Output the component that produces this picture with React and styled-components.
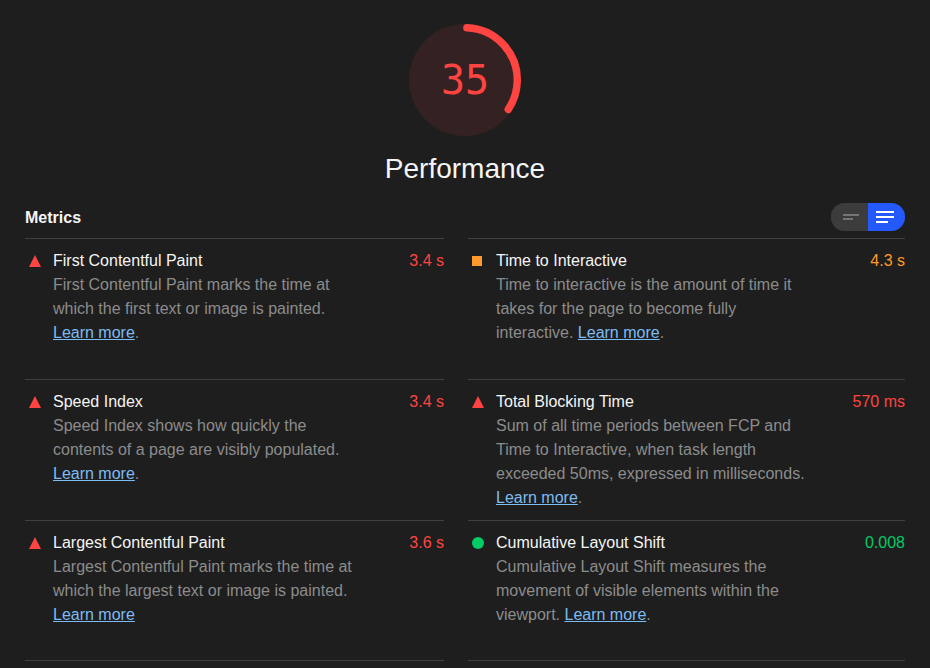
import React, { useState } from "react";
import styled, { createGlobalStyle, css } from "styled-components";

const colors = {
  page: "#1e1e1e",
  text: "#f5f5f5",
  muted: "#8c8c8c",
  line: "#3f3f3f",
  link: "#7cbcf3",
  fail: "#ff4441",
  average: "#ff9a2b",
  pass: "#00cc66",
};

const GlobalStyle = createGlobalStyle`
  * { box-sizing: border-box; }
  body {
    margin: 0;
    background: ${colors.page};
    color: ${colors.text};
    font: 16px/24px "Liberation Sans", Helvetica, Arial, sans-serif;
  }
`;

const Page = styled.main`
  padding: 24px 25px 0;
`;

const Summary = styled.header`
  display: flex;
  flex-direction: column;
  align-items: center;
  gap: 17px;
`;

const Gauge = styled.div`
  display: grid;
  place-items: center;
  width: 112px;
  height: 112px;
  & > * { grid-area: 1 / 1; }
`;

const GaugeDial = styled.svg`
  display: block;
  width: 100%;
  height: 100%;
  overflow: visible;
`;

const GaugeScore = styled.span`
  color: ${colors.fail};
  font: 40px/48px "DejaVu Sans Mono", monospace;
`;

const Title = styled.h1`
  margin: 0;
  font-size: 28px;
  line-height: 32px;
  font-weight: 400;
`;

const MetricsHeader = styled.div`
  display: flex;
  align-items: flex-end;
  justify-content: space-between;
  margin: 18px 0 7px;
`;

const MetricsTitle = styled.h2`
  margin: 0;
  font-size: 16px;
  line-height: 26px;
  font-weight: 700;
`;

const Toggle = styled.div`
  display: flex;
  border-radius: 14px;
  overflow: hidden;
  background: #3c3c3c;
`;

const ToggleButton = styled.button`
  display: flex;
  align-items: center;
  justify-content: center;
  width: 37px;
  height: 28px;
  padding: 0;
  border: 0;
  cursor: pointer;
  color: ${(p) => (p.$active ? "#ffffff" : "#757575")};
  background: ${(p) => (p.$active ? "#2459fb" : "#3c3c3c")};
  ${(p) => p.$end === "left" && css`padding-left: 3px;`}
  ${(p) => p.$end === "right" && css`padding-right: 3px;`}
`;

const Columns = styled.div`
  display: grid;
  grid-template-columns: minmax(0, 419fr) minmax(0, 437fr);
  column-gap: 24px;
`;

const Metric = styled.article`
  display: grid;
  grid-template-columns: 28px minmax(0, 1fr) auto;
  align-content: start;
  min-height: 141px;
  padding-top: 10px;
  border-top: 1px solid ${colors.line};
  ${(p) => p.$last && css`border-bottom: 1px solid ${colors.line};`}
`;

const MarkerCell = styled.span`
  display: flex;
  align-items: center;
  height: 24px;
  padding-left: 4px;
`;

const Marker = styled.span`
  ${(p) => p.$rating === "fail" && css`
    width: 0;
    border: 6px solid transparent;
    border-top: 0;
    border-bottom: 12px solid ${colors.fail};
  `}
  ${(p) => p.$rating === "average" && css`
    width: 10px;
    height: 10px;
    background: ${colors.average};
  `}
  ${(p) => p.$rating === "pass" && css`
    width: 12px;
    height: 12px;
    border-radius: 50%;
    background: ${colors.pass};
  `}
`;

const MetricName = styled.h3`
  margin: 0;
  font-size: 16px;
  line-height: 24px;
  font-weight: 400;
`;

const MetricValue = styled.span`
  color: ${(p) => colors[p.$rating]};
`;

const Description = styled.p`
  grid-column: 2 / -1;
  max-width: 312px;
  margin: 0;
  color: ${colors.muted};
`;

const Link = styled.a`
  color: ${colors.link};
`;

const metrics = [
  { name: "First Contentful Paint", value: "3.4 s", rating: "fail", text: "First Contentful Paint marks the time at which the first text or image is painted.", end: "." },
  { name: "Time to Interactive", value: "4.3 s", rating: "average", text: "Time to interactive is the amount of time it takes for the page to become fully interactive.", end: "." },
  { name: "Speed Index", value: "3.4 s", rating: "fail", text: "Speed Index shows how quickly the contents of a page are visibly populated.", end: "." },
  { name: "Total Blocking Time", value: "570 ms", rating: "fail", text: "Sum of all time periods between FCP and Time to Interactive, when task length exceeded 50ms, expressed in milliseconds.", end: "." },
  { name: "Largest Contentful Paint", value: "3.6 s", rating: "fail", text: "Largest Contentful Paint marks the time at which the largest text or image is painted.", end: "" },
  { name: "Cumulative Layout Shift", value: "0.008", rating: "pass", text: "Cumulative Layout Shift measures the movement of visible elements within the viewport.", end: "." },
];

function ScoreGauge({ score }) {
  const arc = (score / 100) * 2 * Math.PI * 56 - 4;
  return (
    <Gauge>
      <GaugeDial viewBox="0 0 120 120" aria-hidden="true">
        <circle cx="60" cy="60" r="60" fill={colors.fail} fillOpacity="0.1" />
        <circle
          cx="60"
          cy="60"
          r="56"
          fill="none"
          stroke={colors.fail}
          strokeWidth="8"
          strokeLinecap="round"
          strokeDasharray={`${arc} 352`}
          transform="rotate(-87.95 60 60)"
        />
      </GaugeDial>
      <GaugeScore>{score}</GaugeScore>
    </Gauge>
  );
}

export default function App() {
  const [expanded, setExpanded] = useState(true);
  return (
    <>
      <GlobalStyle />
      <Page>
        <Summary>
          <ScoreGauge score={35} />
          <Title>Performance</Title>
        </Summary>
        <MetricsHeader>
          <MetricsTitle>Metrics</MetricsTitle>
          <Toggle role="group" aria-label="Metric view">
            <ToggleButton type="button" aria-label="Compact view" aria-pressed={!expanded} $active={!expanded} $end="left" onClick={() => setExpanded(false)}>
              <svg width="16" height="6" viewBox="0 0 16 6" fill="currentColor" aria-hidden="true">
                <path d="M0 0h16v2H0zM0 4h10v2H0z" />
              </svg>
            </ToggleButton>
            <ToggleButton type="button" aria-label="Expanded view" aria-pressed={expanded} $active={expanded} $end="right" onClick={() => setExpanded(true)}>
              <svg width="18" height="12" viewBox="0 0 18 12" fill="currentColor" aria-hidden="true">
                <path d="M0 0h18v2H0zM0 5h18v2H0zM0 10h12v2H0z" />
              </svg>
            </ToggleButton>
          </Toggle>
        </MetricsHeader>
        <Columns>
          {metrics.map((m, i) => (
            <Metric key={m.name} $last={i >= metrics.length - 2}>
              <MarkerCell>
                <Marker $rating={m.rating} />
              </MarkerCell>
              <MetricName>{m.name}</MetricName>
              <MetricValue $rating={m.rating}>{m.value}</MetricValue>
              {expanded && (
                <Description>
                  {m.text} <Link href="#learn-more">Learn more</Link>
                  {m.end}
                </Description>
              )}
            </Metric>
          ))}
        </Columns>
      </Page>
    </>
  );
}
